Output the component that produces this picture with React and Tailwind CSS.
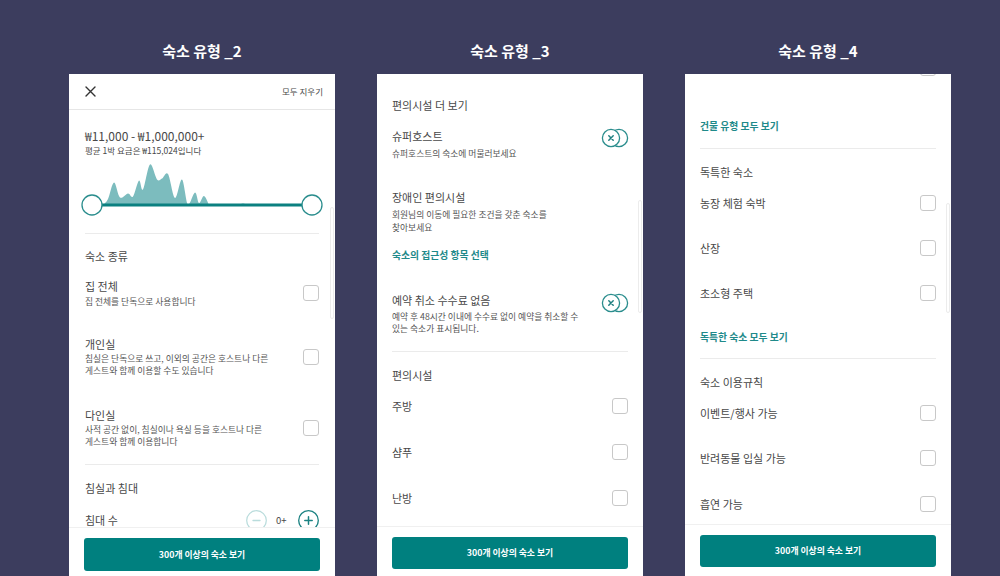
import React from 'react';

const font = "font-['Noto_Sans_CJK_KR','Noto_Sans',sans-serif]";

// price histogram, coords relative to the chart box
const peaks = [
  [18, 44], [23, 38], [29, 21.5], [35, 36.5], [43, 32.5], [48, 35.5], [54, 19.5], [58, 28.5],
  [65, 3.5], [72, 18.5], [77, 17.5], [83, 13], [90, 37], [97, 18.5], [103, 44], [110, 31.5],
  [114, 42], [119, 35], [124, 44],
];

const curve = (p) => {
  let d = `M${p[0][0]},${p[0][1]}`;
  for (let i = 0; i < p.length - 1; i++) {
    const p0 = p[i - 1] || p[i];
    const p1 = p[i];
    const p2 = p[i + 1];
    const p3 = p[i + 2] || p2;
    const c1x = p1[0] + (p2[0] - p0[0]) / 6;
    const c1y = Math.min(44, p1[1] + (p2[1] - p0[1]) / 6);
    const c2x = p2[0] - (p3[0] - p1[0]) / 6;
    const c2y = Math.min(44, p2[1] - (p3[1] - p1[1]) / 6);
    d += ` C${c1x},${c1y} ${c2x},${c2y} ${p2[0]},${p2[1]}`;
  }
  return d + 'Z';
};

const Check = () => <div className="w-4 h-4 shrink-0 rounded-[3px] border border-[#c8c8c8]" />;

const Toggle = ({ className = '' }) => (
  <svg width="28" height="20" viewBox="0 0 28 20" className={`shrink-0 ${className}`}>
    <circle cx="18" cy="10" r="8.6" fill="white" stroke="#2a8d8d" strokeWidth="1.3" />
    <circle cx="10" cy="10" r="8.6" fill="white" stroke="#2a8d8d" strokeWidth="1.3" />
    <path d="M7.8 7.8 L12.2 12.2 M12.2 7.8 L7.8 12.2" stroke="#1f7f80" strokeWidth="1.5" strokeLinecap="round" />
  </svg>
);

const Title = ({ children, className = '' }) => (
  <p className={`text-[11px] leading-[16px] text-[#484848] whitespace-nowrap ${className}`}>{children}</p>
);

const Sub = ({ children, className = '' }) => (
  <p className={`text-[8.75px] text-[#555] whitespace-nowrap ${className}`}>{children}</p>
);

const LinkText = ({ children, className = '' }) => (
  <p className={`text-[9.8px] leading-[14px] font-semibold text-[#1f8a8a] ${className}`}>{children}</p>
);

const Divider = ({ className = '' }) => <div className={`h-px bg-[#ebebeb] ${className}`} />;

const CheckRow = ({ label, h }) => (
  <div className={`flex items-center justify-between ${h}`}>
    <Title>{label}</Title>
    <Check />
  </div>
);

const Footer = ({ px, btn, pb }) => (
  <div className={`shrink-0 border-t border-[#f0f0f0] pt-[10px] ${px} ${pb}`}>
    <button type="button" className={`w-full ${btn} rounded-[3px] bg-[#00807f] text-white text-[8.8px] font-bold`}>
      300개 이상의 숙소 보기
    </button>
  </div>
);

const Panel = ({ title, children, footer, track }) => (
  <div className="w-[266px] shrink-0 flex flex-col">
    <div className="h-[74px] pt-[28px] flex items-center justify-center text-white text-[15px] font-bold">
      {title}
    </div>
    <div className="relative h-[502px] bg-white flex flex-col overflow-hidden">
      <div className="flex-1 overflow-hidden">{children}</div>
      {footer}
      <div className={`absolute right-[1px] w-[4px] rounded-full border border-[#ececec] ${track}`} />
    </div>
  </div>
);

export default function App() {
  return (
    <div className={`h-[576px] w-[1000px] overflow-hidden bg-[#3c3d5e] flex gap-[42px] pl-[69px] ${font}`}>
      <Panel
        title="숙소 유형 _2"
        track="top-[133px] h-[112px]"
        footer={<Footer px="px-[15px]" btn="h-[33px]" pb="pb-[5px]" />}
      >
        <div className="h-[36px] border-b border-[#e6e6e6] flex items-center justify-between pl-4 pr-[12px]">
          <svg width="11" height="11" viewBox="0 0 11 11">
            <path d="M1 1 L10 10 M10 1 L1 10" stroke="#333" strokeWidth="1.4" strokeLinecap="round" />
          </svg>
          <span className="text-[8.5px] text-[#484848]">모두 지우기</span>
        </div>
        <div className="px-4">
          <p className="mt-[18px] text-[12px] leading-[16px] text-[#484848]">₩11,000 - ₩1,000,000+</p>
          <p className="text-[8.5px] leading-[13px] text-[#484848]">평균 1박 요금은 ₩115,024입니다</p>
          <svg className="mt-[3.5px] block w-full h-[56px] overflow-visible" viewBox="0 0 234 56">
            <path d={curve(peaks)} fill="#7cbcbe" />
            <path d="M152 44 C155 44 156 42.5 158 42.5 C160 42.5 161 44 164 44Z" fill="#7cbcbe" />
            <line x1="7" y1="44" x2="227" y2="44" stroke="#0b8080" strokeWidth="3" />
            <circle cx="7" cy="44" r="10" fill="white" stroke="#2a8d8d" strokeWidth="1.3" />
            <circle cx="227" cy="44" r="10" fill="white" stroke="#2a8d8d" strokeWidth="1.3" />
          </svg>
          <Divider className="mt-[16px]" />
          <Title className="mt-[14px]">숙소 종류</Title>

          <div className="mt-[14px] flex items-center justify-between">
            <div>
              <Title>집 전체</Title>
              <Sub className="mt-px leading-[13px]">집 전체를 단독으로 사용합니다</Sub>
            </div>
            <Check />
          </div>
          <div className="mt-[28px] flex items-center justify-between">
            <div>
              <Title>개인실</Title>
              <Sub className="mt-px leading-[12.5px]">
                침실은 단독으로 쓰고, 이외의 공간은 호스트나 다른
                <br />
                게스트와 함께 이용할 수도 있습니다
              </Sub>
            </div>
            <Check />
          </div>
          <div className="mt-[29px] flex items-center justify-between">
            <div>
              <Title>다인실</Title>
              <Sub className="mt-px leading-[12.5px]">
                사적 공간 없이, 침실이나 욕실 등을 호스트나 다른
                <br />
                게스트와 함께 이용합니다
              </Sub>
            </div>
            <Check />
          </div>
          <Divider className="mt-[15px]" />
          <Title className="mt-[15px]">침실과 침대</Title>
          <div className="mt-[14px] flex items-center justify-between">
            <Title>침대 수</Title>
            <div className="flex items-center">
              <svg width="21" height="21" viewBox="0 0 21 21">
                <circle cx="10.5" cy="10.5" r="9.8" fill="white" stroke="#b9dcdc" strokeWidth="1.2" />
                <path d="M7 10.5 H14" stroke="#b9dcdc" strokeWidth="1.3" strokeLinecap="round" />
              </svg>
              <span className="ml-[9px] w-[14px] text-[9.5px] text-[#484848]">0+</span>
              <svg width="21" height="21" viewBox="0 0 21 21" className="ml-[8px]">
                <circle cx="10.5" cy="10.5" r="9.8" fill="white" stroke="#1b8282" strokeWidth="1.3" />
                <path d="M6.8 10.5 H14.2 M10.5 6.8 V14.2" stroke="#1b8282" strokeWidth="1.5" strokeLinecap="round" />
              </svg>
            </div>
          </div>
        </div>
      </Panel>

      <Panel
        title="숙소 유형 _3"
        track="top-[126px] h-[113px]"
        footer={<Footer px="px-[15px]" btn="h-[32px]" pb="pb-[7px]" />}
      >
        <div className="px-[15px] pt-[23px]">
          <Title>편의시설 더 보기</Title>

          <div className="mt-[15px] flex items-start justify-between">
            <div>
              <Title>슈퍼호스트</Title>
              <Sub className="mt-[3px] leading-[13px]">슈퍼호스트의 숙소에 머물러보세요</Sub>
            </div>
            <Toggle className="-mr-px" />
          </div>

          <div className="mt-[29px]">
            <Title>장애인 편의시설</Title>
            <Sub className="mt-[3px] leading-[13px]">
              회원님의 이동에 필요한 조건을 갖춘 숙소를
              <br />
              찾아보세요
            </Sub>
          </div>
          <LinkText className="mt-[14px]">숙소의 접근성 항목 선택</LinkText>

          <div className="mt-[30px] flex items-start justify-between">
            <div>
              <Title>예약 취소 수수료 없음</Title>
              <Sub className="mt-[3px] leading-[12px]">
                예약 후 48시간 이내에 수수료 없이 예약을 취소할 수
                <br />
                있는 숙소가 표시됩니다.
              </Sub>
            </div>
            <Toggle className="-mr-px mt-px" />
          </div>
          <Divider className="mt-[16px]" />
          <Title className="mt-[15px]">편의시설</Title>
          <CheckRow label="주방" h="h-[46px]" />
          <CheckRow label="샴푸" h="h-[46px]" />
          <CheckRow label="난방" h="h-[46px]" />
        </div>
      </Panel>

      <Panel
        title="숙소 유형 _4"
        track="top-[129px] h-[110px]"
        footer={<Footer px="px-[15px]" btn="h-[32px]" pb="pb-[9px]" />}
      >
        <div className="px-[15px]">
          <div className="-mt-[14px] flex justify-end">
            <Check />
          </div>
          <LinkText className="mt-[43px]">건물 유형 모두 보기</LinkText>
          <Divider className="mt-[15px]" />
          <Title className="mt-[15px]">독특한 숙소</Title>
          <CheckRow label="농장 체험 숙박" h="h-[45px]" />
          <CheckRow label="산장" h="h-[45px]" />
          <CheckRow label="초소형 주택" h="h-[45px]" />
          <LinkText className="mt-[15px]">독특한 숙소 모두 보기</LinkText>
          <Divider className="mt-[14px]" />
          <Title className="mt-[15px]">숙소 이용규칙</Title>
          <CheckRow label="이벤트/행사 가능" h="h-[45.5px]" />
          <CheckRow label="반려동물 입실 가능" h="h-[45.5px]" />
          <CheckRow label="흡연 가능" h="h-[45.5px]" />
        </div>
      </Panel>
    </div>
  );
}
